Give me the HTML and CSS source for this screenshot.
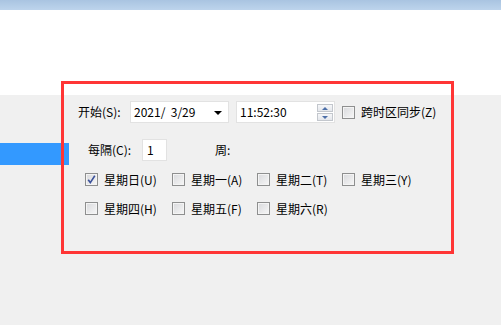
FILE: index.html
```html
<!DOCTYPE html>
<html>
<head>
<meta charset="utf-8">
<link rel="stylesheet" href="styles.css">
</head>
<body>
<div class="titlebar"></div>
<div class="whitearea"></div>
<div class="grayarea">
  <div class="navsel"></div>
</div>
<div class="annot">
  <div class="row row-start">
    <span class="lbl lbl-start">开始(S):</span>
    <div class="field date">
      <span class="val">2021/&nbsp;&nbsp;3/29</span>
      <span class="drop"></span>
    </div>
    <div class="field time">
      <span class="val">11:52:30</span>
      <div class="spin">
        <span class="sb up"><i></i></span>
        <span class="sb down"><i></i></span>
      </div>
    </div>
    <span class="cb"></span>
    <span class="lbl">跨时区同步(Z)</span>
  </div>
  <div class="row row-every">
    <span class="lbl lbl-every">每隔(C):</span>
    <div class="field num"><span class="val">1</span></div>
    <span class="lbl lbl-week">周:</span>
  </div>
  <div class="days">
    <label class="day"><span class="cb checked"><svg width="11" height="11" viewBox="0 0 11 11"><path d="M2.2 5.8 L4.3 8.6 L8.8 1.8" fill="none" stroke="#3b519a" stroke-width="1.6"/></svg></span><span class="lbl">星期日(U)</span></label>
    <label class="day"><span class="cb"></span><span class="lbl">星期一(A)</span></label>
    <label class="day"><span class="cb"></span><span class="lbl">星期二(T)</span></label>
    <label class="day"><span class="cb"></span><span class="lbl">星期三(Y)</span></label>
    <label class="day"><span class="cb"></span><span class="lbl">星期四(H)</span></label>
    <label class="day"><span class="cb"></span><span class="lbl">星期五(F)</span></label>
    <label class="day"><span class="cb"></span><span class="lbl">星期六(R)</span></label>
  </div>
</div>
</body>
</html>
```
FILE: styles.css
```css
* { box-sizing: border-box; }
html, body { margin: 0; padding: 0; }
body {
  width: 501px;
  height: 325px;
  overflow: hidden;
  background: #f0f0f0;
  font-family: "Noto Sans CJK SC", "Noto Sans", sans-serif;
  font-size: 12px;
  color: #000;
  position: relative;
}
.titlebar {
  height: 10px;
  background: linear-gradient(#a9c4e1, #bdd4ec);
}
.whitearea {
  height: 85px;
  background: #fff;
}
.grayarea {
  height: 230px;
  background: #f0f0f0;
  padding-top: 48px;
}
.navsel {
  width: 69px;
  height: 22px;
  background: #3399ff;
}
.annot {
  position: absolute;
  left: 61px;
  top: 81px;
  width: 393px;
  height: 173px;
  border: 3px solid #ff3535;
  padding: 17px 0 0 14px;
}
.row {
  display: flex;
  align-items: center;
  height: 22px;
}
.lbl {
  white-space: nowrap;
  line-height: 14px;
}
.lbl-start { width: 52px; }
.field {
  height: 22px;
  background: #fff;
  border: 1px solid #e2e2e2;
  display: flex;
  align-items: center;
  position: relative;
}
.val { padding-left: 3px; line-height: 14px; }
.date { width: 99px; margin-right: 7px; }
.drop {
  position: absolute;
  right: 6px;
  top: 9px;
  width: 0; height: 0;
  border-left: 4px solid transparent;
  border-right: 4px solid transparent;
  border-top: 4px solid #000;
}
.time { width: 99px; margin-right: 7px; }
.spin {
  position: absolute;
  right: 1px;
  top: 2px;
  display: flex;
  flex-direction: column;
  gap: 1px;
}
.sb {
  width: 16px;
  height: 8px;
  border: 1px solid #c3c7cd;
  background: linear-gradient(#f6f7f9, #e4e7ec);
  display: flex;
  justify-content: center;
  align-items: center;
}
.sb i { width: 0; height: 0; border-left: 3px solid transparent; border-right: 3px solid transparent; }
.up i { border-bottom: 3px solid #4c6fa8; }
.down i { border-top: 3px solid #4c6fa8; }
.cb {
  width: 13px;
  height: 13px;
  border: 1px solid #8e8f8f;
  background: linear-gradient(135deg, #d8d9dc, #f7f7f7);
  box-shadow: inset 0 0 0 1px #f4f4f4;
  display: inline-flex;
  align-items: center;
  justify-content: center;
  flex: none;
}
.cb svg { display: block; }
.row .cb { margin-right: 6px; margin-top: 1px; }
.row-every { margin-top: 16px; padding-left: 10px; }
.lbl-every { width: 54px; }
.num { width: 25px; margin-right: 48px; }
.num .val { padding-left: 4px; }
.days {
  margin-top: 12px;
  padding-left: 7px;
  display: grid;
  grid-template-columns: 87px 85px 85px 85px;
  row-gap: 16px;
}
.day {
  display: flex;
  align-items: center;
  height: 13px;
}
.day .cb { margin-right: 6px; }
```
